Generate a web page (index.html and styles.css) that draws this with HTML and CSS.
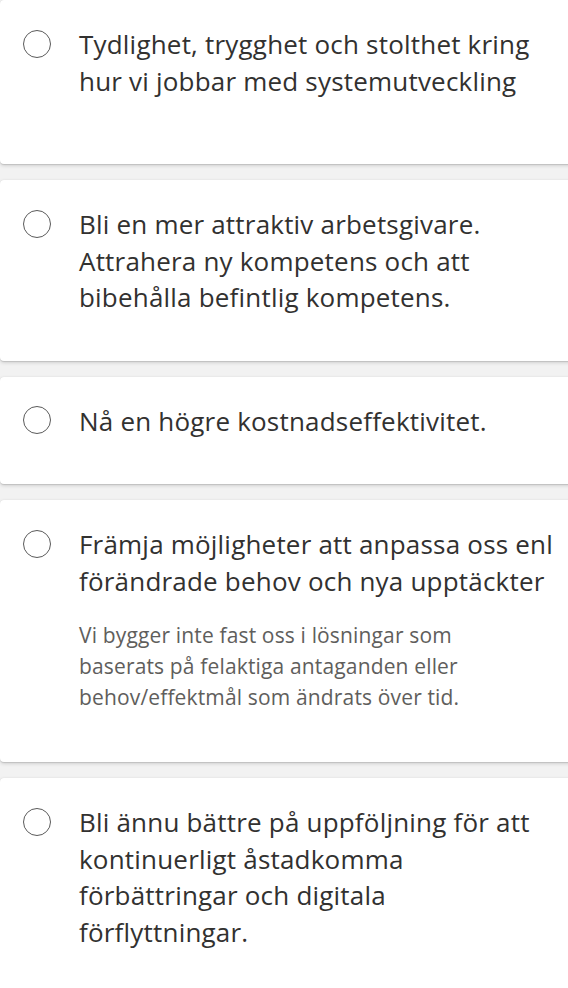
FILE: index.html
```html
<!DOCTYPE html>
<html lang="sv">
<head>
<meta charset="utf-8">
<link rel="stylesheet" href="styles.css">
</head>
<body>
<div class="list">
  <div class="card card-first">
    <div class="option">
      <span class="radio"></span>
      <div class="body">
        <div class="title">Tydlighet, trygghet och stolthet kring<br>hur vi jobbar med systemutveckling</div>
      </div>
    </div>
  </div>
  <div class="card">
    <div class="option">
      <span class="radio"></span>
      <div class="body">
        <div class="title">Bli en mer attraktiv arbetsgivare. Attrahera ny kompetens och att bibehålla befintlig kompetens.</div>
      </div>
    </div>
  </div>
  <div class="card">
    <div class="option">
      <span class="radio"></span>
      <div class="body">
        <div class="title">Nå en högre kostnadseffektivitet.</div>
      </div>
    </div>
  </div>
  <div class="card">
    <div class="option">
      <span class="radio"></span>
      <div class="body">
        <div class="title">Främja möjligheter att anpassa oss enl förändrade behov och nya upptäckter</div>
        <div class="desc">Vi bygger inte fast oss i lösningar som baserats på felaktiga antaganden eller behov/effektmål som ändrats över tid.</div>
      </div>
    </div>
  </div>
  <div class="card">
    <div class="option">
      <span class="radio"></span>
      <div class="body">
        <div class="title">Bli ännu bättre på uppföljning för att kontinuerligt åstadkomma<br>förbättringar och digitala förflyttningar.</div>
      </div>
    </div>
  </div>
</div>
</body>
</html>
```
FILE: styles.css
```css
html, body {
  margin: 0;
  padding: 0;
  background: #f2f2f2;
  overflow: hidden;
}
body {
  font-family: "Open Sans", "Noto Sans", sans-serif;
  font-weight: 380;
  color: #323130;
}
.list {
  display: flex;
  flex-direction: column;
  gap: 16px;
  width: 580px;
}
.card {
  background: #fff;
  border-radius: 4px;
  box-shadow: 0 1.6px 3.6px rgba(0,0,0,0.13), 0 0.3px 0.9px rgba(0,0,0,0.11);
  padding: 26px 0 45px 0;
}
.card-first {
  padding-bottom: 65px;
}
.option {
  display: flex;
  align-items: flex-start;
}
.radio {
  flex: none;
  width: 26px;
  height: 26px;
  border: 1.6px solid #5a5a5a;
  border-radius: 50%;
  margin: 3.5px 28px 0 23px;
}
.body {
  width: 482px;
}
.title {
  font-size: 26px;
  line-height: 36.5px;
  letter-spacing: 0.2px;
}
.desc {
  margin-top: 21px;
  padding-bottom: 4px;
  width: 430px;
  font-size: 21px;
  line-height: 31px;
  letter-spacing: 0.15px;
  color: #605e5c;
}
```
